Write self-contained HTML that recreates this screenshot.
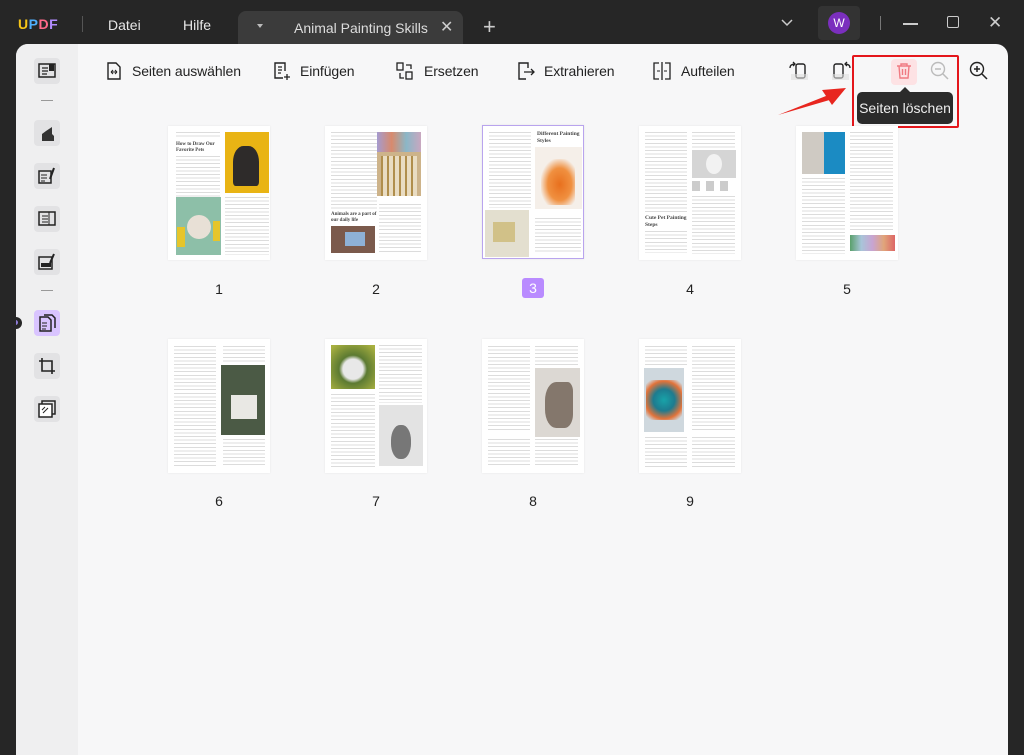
<!DOCTYPE html>
<html><head><meta charset="utf-8"><style>
*{margin:0;padding:0;box-sizing:border-box}
body{width:1024px;height:755px;background:#262626;font-family:"Liberation Sans",sans-serif;position:relative;overflow:hidden}
.a{position:absolute}
.tt{color:#e8e8e8;font-size:14px}
.panel{left:16px;top:44px;width:992px;height:711px;background:#f7f7f8;border-radius:12px 12px 0 0;overflow:hidden}
.side{left:0;top:0;width:62px;height:711px;background:#efeff0}
.sb{width:26px;height:26px;background:#e2e2e4;border-radius:4px;left:18px}
.sb svg{position:absolute;left:4px;top:4px}
.tb{font-size:14px;color:#222;top:63px;letter-spacing:-0.1px}
.pg{width:102px;height:134px;background:#fff;box-shadow:0 0 2px rgba(0,0,0,.08)}
.ln{position:absolute;background:repeating-linear-gradient(to bottom,#dcdcdc 0 1px,transparent 1px 3.6px)}
.im{position:absolute}
.num{font-size:14px;color:#222;width:30px;text-align:center}
.hd{position:absolute;font-family:"Liberation Serif",serif;font-weight:bold;font-size:5px;color:#444;line-height:6px;white-space:nowrap}
</style></head><body>
<div class="a" style="left:18px;top:16px;font-weight:bold;font-size:14px;letter-spacing:0.5px"><span style="color:#f5c518">U</span><span style="color:#4fb0ff">P</span><span style="color:#ff6a8a">D</span><span style="color:#b38cff">F</span></div>
<div class="a" style="left:82px;top:16px;width:1px;height:16px;background:#555"></div>
<div class="a tt" style="left:108px;top:17px">Datei</div>
<div class="a tt" style="left:183px;top:17px">Hilfe</div>
<div class="a" style="left:238px;top:11px;width:225px;height:34px;background:#3b3b3b;border-radius:8px 8px 0 0"></div>
<div class="a" style="left:257px;top:24px;width:0;height:0;border-left:3px solid transparent;border-right:3px solid transparent;border-top:4px solid #bbb"></div>
<div class="a tt" style="left:294px;top:20px;color:#ddd">Animal Painting Skills</div>
<div class="a" style="left:440px;top:17px;color:#ccc;font-size:16px">✕</div>
<div class="a" style="left:483px;top:14px;color:#ccc;font-size:22px;font-weight:300">+</div>
<svg class="a" style="left:780px;top:18px" width="14" height="10"><path d="M2 2l5 5 5-5" stroke="#ccc" stroke-width="1.5" fill="none"/></svg>
<div class="a" style="left:818px;top:6px;width:42px;height:34px;background:#333;border-radius:4px"></div>
<div class="a" style="left:828px;top:12px;width:22px;height:22px;border-radius:50%;background:#7b2fbe;color:#fff;font-size:12px;text-align:center;line-height:22px">W</div>
<div class="a" style="left:880px;top:16px;width:1px;height:14px;background:#777"></div>
<div class="a" style="left:903px;top:23px;width:15px;height:1.5px;background:#ccc"></div>
<div class="a" style="left:947px;top:16px;width:12px;height:12px;border:1.5px solid #ccc;border-radius:2px"></div>
<div class="a" style="left:988px;top:13px;color:#ccc;font-size:17px">✕</div>

<div class="a panel">
 <div class="a side"></div>
 <div class="a sb" style="top:14px;left:18px"><svg width="18" height="18"><rect x="1" y="2" width="16" height="13" fill="none" stroke="#222" stroke-width="1.5"/><path d="M4 6h6M4 9h6M4 12h5" stroke="#222" stroke-width="1.2"/><rect x="11" y="2" width="5" height="7" fill="#222"/></svg></div>
 <div class="a" style="left:25px;top:56px;width:12px;height:1px;background:#999"></div>
 <div class="a sb" style="top:76px"><svg width="18" height="18"><path d="M4 17V10l4-3 6-4v7l2 2v5z" fill="#333"/></svg></div>
 <div class="a sb" style="top:119px"><svg width="18" height="18"><rect x="1" y="4" width="12" height="12" fill="none" stroke="#222" stroke-width="1.5"/><path d="M3 8h6M3 11h6M3 14h4" stroke="#222"/><path d="M12 12l4-11" stroke="#222" stroke-width="2"/></svg></div>
 <div class="a sb" style="top:162px"><svg width="18" height="18"><rect x="1" y="2" width="16" height="13" fill="none" stroke="#222" stroke-width="1.5"/><path d="M4 6h6M4 9h6M4 12h6M11 2v13" stroke="#222"/></svg></div>
 <div class="a sb" style="top:205px"><svg width="18" height="18"><rect x="1" y="4" width="13" height="12" fill="none" stroke="#222" stroke-width="1.5"/><rect x="3" y="10" width="10" height="4" fill="#222"/><path d="M12 10l4-9" stroke="#222" stroke-width="2"/></svg></div>
 <div class="a" style="left:25px;top:246px;width:12px;height:1px;background:#999"></div>
 <div class="a sb" style="top:266px;background:#d9c4ff"><svg width="18" height="18"><path d="M2 3h8l3 3v11H2z" fill="none" stroke="#222" stroke-width="1.5"/><path d="M6 1h8l3 3v10" fill="none" stroke="#222" stroke-width="1.5"/><path d="M4 9h5M4 12h5M4 15h4" stroke="#222"/></svg></div>
 <div class="a sb" style="top:309px"><svg width="18" height="18"><path d="M4 1v13h13M1 4h13v13" fill="none" stroke="#222" stroke-width="1.6"/></svg></div>
 <div class="a sb" style="top:352px"><svg width="18" height="18"><rect x="4" y="1" width="13" height="13" fill="none" stroke="#222" stroke-width="1.5"/><rect x="1" y="4" width="13" height="13" fill="#fff" stroke="#222" stroke-width="1.5"/><path d="M5 13l5-5M4 10l3-3" stroke="#222"/></svg></div>
 <div class="a" style="left:-6px;top:273px;width:12px;height:12px;border-radius:50%;background:#262626"></div>
 <div class="a" style="left:-3px;top:276px;width:5px;height:5px;border-radius:50%;background:#8f7cd8"></div>
</div>

<svg class="a" style="left:106px;top:62px" width="16" height="18"><path d="M2 1h8l4 4v12H2z" fill="none" stroke="#222" stroke-width="1.4"/><path d="M5 10h6M5 10l2-2M5 10l2 2M11 10l-2-2M11 10l-2 2" stroke="#222"/></svg>
<div class="a tb" style="left:132px">Seiten auswählen</div>
<svg class="a" style="left:273px;top:62px" width="18" height="18"><path d="M10 16H2V1h10v8" fill="none" stroke="#222" stroke-width="1.4"/><path d="M5 5h4M5 8h4M5 11h3M14 12v6M11 15h6" stroke="#222" stroke-width="1.3"/></svg>
<div class="a tb" style="left:300px">Einfügen</div>
<svg class="a" style="left:396px;top:62px" width="18" height="18"><rect x="1" y="1" width="6" height="7" fill="none" stroke="#222" stroke-width="1.3"/><rect x="10" y="10" width="6" height="7" fill="none" stroke="#222" stroke-width="1.3"/><path d="M10 3h5v4M4 11v5h4" fill="none" stroke="#222" stroke-width="1.3"/></svg>
<div class="a tb" style="left:424px">Ersetzen</div>
<svg class="a" style="left:517px;top:62px" width="18" height="18"><path d="M9 17H2V1h9v5" fill="none" stroke="#222" stroke-width="1.4"/><path d="M7 10h10M14 7l3 3-3 3" fill="none" stroke="#222" stroke-width="1.3"/></svg>
<div class="a tb" style="left:544px">Extrahieren</div>
<svg class="a" style="left:653px;top:62px" width="18" height="18"><path d="M6 1H1v16h5M12 1h5v16h-5M9 0v18" fill="none" stroke="#222" stroke-width="1.3"/><path d="M4 9h3M14 9h-3" stroke="#222"/></svg>
<div class="a tb" style="left:681px">Aufteilen</div>
<svg class="a" style="left:788px;top:60px" width="22" height="22"><rect x="8" y="4" width="9" height="14" rx="2" fill="none" stroke="#222" stroke-width="1.4"/><path d="M2 8c0-3 2-4 5-4M5 2l2 2-2 2" fill="none" stroke="#222" stroke-width="1.3"/><rect x="3" y="14" width="17" height="6" fill="#ddd" opacity=".6"/></svg>
<svg class="a" style="left:830px;top:60px" width="22" height="22"><rect x="4" y="4" width="9" height="14" rx="2" fill="none" stroke="#222" stroke-width="1.4"/><path d="M20 8c0-3-2-4-5-4M17 2l-2 2 2 2" fill="none" stroke="#222" stroke-width="1.3"/><rect x="2" y="14" width="17" height="6" fill="#ddd" opacity=".6"/></svg>
<div class="a" style="left:852px;top:55px;width:107px;height:73px;border:2.5px solid #e4161b;border-radius:2px"></div>
<div class="a" style="left:891px;top:59px;width:26px;height:26px;background:#fde2e4;border-radius:4px"></div>
<svg class="a" style="left:896px;top:62px" width="16" height="18"><path d="M1 4h14M5 4V2h6v2M3 4l1 12h8l1-12M6.5 7v6M9.5 7v6" fill="none" stroke="#f07a82" stroke-width="1.4"/></svg>
<svg class="a" style="left:930px;top:61px" width="20" height="20"><circle cx="8" cy="8" r="6.5" fill="none" stroke="#bbb" stroke-width="1.4"/><path d="M5 8h6M13 13l5 5" stroke="#bbb" stroke-width="1.5"/></svg>
<svg class="a" style="left:969px;top:61px" width="20" height="20"><circle cx="8" cy="8" r="6.5" fill="none" stroke="#222" stroke-width="1.4"/><path d="M5 8h6M8 5v6M13 13l5 5" stroke="#222" stroke-width="1.5"/></svg>
<div class="a" style="left:900px;top:87px;width:0;height:0;border-left:5px solid transparent;border-right:5px solid transparent;border-bottom:5px solid #2b2b2b"></div>
<div class="a" style="left:857px;top:92px;width:96px;height:32px;background:#2b2b2b;border-radius:5px;color:#eee;font-size:14px;text-align:center;line-height:32px">Seiten löschen</div>
<svg class="a" style="left:775px;top:80px" width="75" height="40"><path d="M3 35L56 14 58 19z" fill="#e8261f"/><path d="M71 8L47 10l10 15z" fill="#e8261f"/></svg>

<div class="a pg" style="left:168px;top:126px">
 <div class="ln" style="left:8px;top:6px;width:44px;height:6px"></div>
 <div class="hd" style="left:8px;top:16px">How to Draw Our<br>Favorite Pets</div>
 <div class="ln" style="left:8px;top:30px;width:44px;height:46px"></div>
 <div class="im" style="left:57px;top:6px;width:44px;height:61px;background:#e9b414"><div class="im" style="left:8px;top:14px;width:26px;height:40px;background:#2e2b2a;border-radius:40% 40% 10% 10%"></div></div>
 <div class="im" style="left:8px;top:71px;width:45px;height:58px;background:#8dbfa8"><div class="im" style="left:11px;top:18px;width:24px;height:24px;border-radius:50%;background:#e8e0d6"></div><div class="im" style="left:1px;top:30px;width:8px;height:20px;background:#e6c52a"></div><div class="im" style="left:37px;top:24px;width:7px;height:20px;background:#e6c52a"></div></div>
 <div class="ln" style="left:57px;top:71px;width:44px;height:58px"></div>
</div>
<div class="a pg" style="left:325px;top:126px">
 <div class="ln" style="left:6px;top:6px;width:46px;height:78px"></div>
 <div class="im" style="left:52px;top:6px;width:44px;height:64px;background:#cdb38a"><div class="im" style="left:0;top:0;width:44px;height:20px;background:linear-gradient(90deg,#a49bd0,#d88a6d,#8bb7c7,#c9a7c0)"></div><div class="im" style="left:4px;top:24px;width:36px;height:40px;background:repeating-linear-gradient(90deg,#b08e4c 0 2px,#e9dcc2 2px 6px)"></div></div>
 <div class="hd" style="left:6px;top:86px">Animals are a part of<br>our daily life</div>
 <div class="im" style="left:6px;top:100px;width:44px;height:27px;background:#7b5a4c"><div class="im" style="left:14px;top:6px;width:20px;height:14px;background:#8eb1d6"></div></div>
 <div class="ln" style="left:54px;top:78px;width:42px;height:50px"></div>
</div>
<div class="a pg" style="left:482px;top:125px;border:1.5px solid #b9a4ee">
 <div class="ln" style="left:6px;top:6px;width:42px;height:76px"></div>
 <div class="hd" style="left:54px;top:5px;font-size:5.5px;line-height:7px">Different Painting<br>Styles</div>
 <div class="im" style="left:52px;top:21px;width:47px;height:62px;background:#f5efe9"><div class="im" style="left:6px;top:12px;width:34px;height:46px;background:radial-gradient(ellipse at 55% 55%,#e8701e 0,#f09040 45%,#f5efe9 75%)"></div></div>
 <div class="im" style="left:2px;top:84px;width:44px;height:47px;background:#e3dfcf"><div class="im" style="left:8px;top:12px;width:22px;height:20px;background:#c9b36a;opacity:.7"></div></div>
 <div class="ln" style="left:52px;top:92px;width:46px;height:36px"></div>
</div>
<div class="a pg" style="left:639px;top:126px">
 <div class="ln" style="left:6px;top:6px;width:42px;height:80px"></div>
 <div class="ln" style="left:53px;top:6px;width:43px;height:16px"></div>
 <div class="im" style="left:53px;top:24px;width:44px;height:28px;background:#d5d5d5"><div class="im" style="left:14px;top:4px;width:16px;height:20px;border-radius:50%;background:#f2f2f2"></div></div>
 <div class="im" style="left:53px;top:55px;width:42px;height:10px;background:repeating-linear-gradient(90deg,#ccc 0 8px,#fff 8px 14px)"></div>
 <div class="hd" style="left:6px;top:89px;font-size:5.5px;line-height:7px">Cute Pet Painting<br>Steps</div>
 <div class="ln" style="left:6px;top:105px;width:42px;height:22px"></div>
 <div class="ln" style="left:53px;top:70px;width:43px;height:58px"></div>
</div>
<div class="a pg" style="left:796px;top:126px">
 <div class="im" style="left:6px;top:6px;width:43px;height:42px;background:#cfcac3"><div class="im" style="left:22px;top:0;width:21px;height:42px;background:#1b8bc3"></div></div>
 <div class="ln" style="left:6px;top:52px;width:43px;height:76px"></div>
 <div class="ln" style="left:54px;top:6px;width:43px;height:100px"></div>
 <div class="im" style="left:54px;top:109px;width:45px;height:16px;background:linear-gradient(90deg,#5aa06b,#a8c5d9,#c8a4d2,#e0a57a,#d66)"></div>
</div>
<div class="a num" style="left:204px;top:281px">1</div>
<div class="a num" style="left:361px;top:281px">2</div>
<div class="a" style="left:522px;top:278px;width:22px;height:20px;background:#b98bff;border-radius:3px;color:#fff;font-size:14px;text-align:center;line-height:20px">3</div>
<div class="a num" style="left:675px;top:281px">4</div>
<div class="a num" style="left:832px;top:281px">5</div>

<div class="a pg" style="left:168px;top:339px">
 <div class="ln" style="left:6px;top:7px;width:42px;height:120px"></div>
 <div class="ln" style="left:55px;top:7px;width:42px;height:16px"></div>
 <div class="im" style="left:53px;top:26px;width:44px;height:70px;background:#4b5a45"><div class="im" style="left:10px;top:30px;width:26px;height:24px;background:#e9e8e4"></div></div>
 <div class="ln" style="left:55px;top:100px;width:42px;height:28px"></div>
</div>
<div class="a pg" style="left:325px;top:339px">
 <div class="im" style="left:6px;top:6px;width:44px;height:44px;background:radial-gradient(circle at 50% 55%,#e8e8e8 0 10px,#5c7a32 14px,#a8b040 30px)"></div>
 <div class="ln" style="left:6px;top:55px;width:44px;height:73px"></div>
 <div class="ln" style="left:54px;top:6px;width:43px;height:58px"></div>
 <div class="im" style="left:54px;top:66px;width:44px;height:61px;background:#e3e3e3"><div class="im" style="left:12px;top:20px;width:20px;height:34px;border-radius:45%;background:#777"></div></div>
</div>
<div class="a pg" style="left:482px;top:339px">
 <div class="ln" style="left:6px;top:7px;width:42px;height:86px"></div>
 <div class="ln" style="left:53px;top:7px;width:43px;height:20px"></div>
 <div class="im" style="left:53px;top:29px;width:45px;height:69px;background:#dcd8d3"><div class="im" style="left:10px;top:14px;width:28px;height:46px;background:#6e5f52;border-radius:40% 20% 30% 40%;opacity:.8"></div></div>
 <div class="ln" style="left:6px;top:100px;width:42px;height:28px"></div>
 <div class="ln" style="left:53px;top:100px;width:43px;height:28px"></div>
</div>
<div class="a pg" style="left:639px;top:339px">
 <div class="ln" style="left:6px;top:7px;width:42px;height:20px"></div>
 <div class="im" style="left:5px;top:29px;width:40px;height:64px;background:#cfd8de"><div class="im" style="left:2px;top:12px;width:36px;height:40px;background:radial-gradient(circle,#18a3a9 0,#1e7b8f 40%,#e2733a 70%,#cfd8de 90%)"></div></div>
 <div class="ln" style="left:53px;top:7px;width:43px;height:86px"></div>
 <div class="ln" style="left:6px;top:98px;width:42px;height:30px"></div>
 <div class="ln" style="left:53px;top:98px;width:43px;height:30px"></div>
</div>
<div class="a num" style="left:204px;top:493px">6</div>
<div class="a num" style="left:361px;top:493px">7</div>
<div class="a num" style="left:518px;top:493px">8</div>
<div class="a num" style="left:675px;top:493px">9</div>
</body></html>
